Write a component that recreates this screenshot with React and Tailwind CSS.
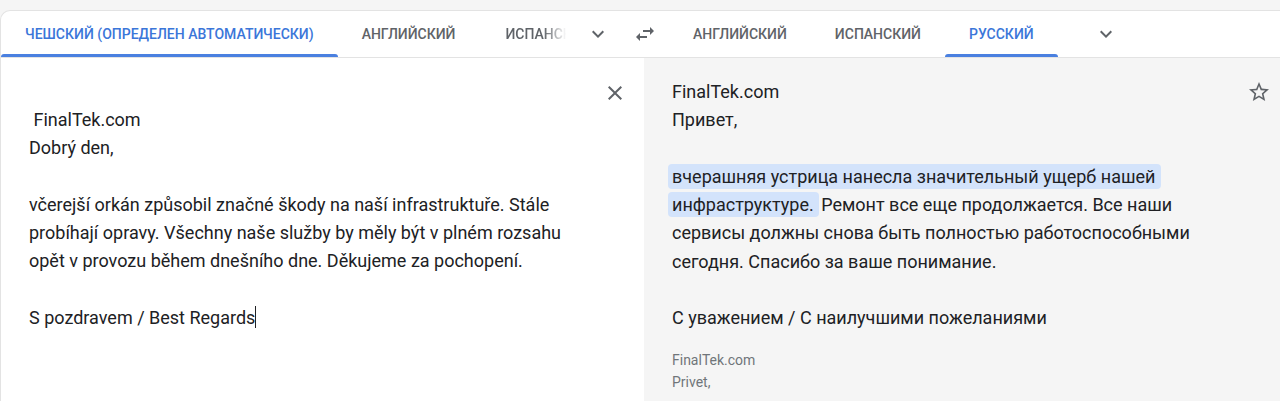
import React from "react";

const font = { fontFamily: "Roboto, 'Noto Sans', Arial, sans-serif" };

function Chevron() {
  return (
    <svg width="24" height="24" viewBox="0 0 24 24" fill="#5f6368">
      <path d="M7.41 8.59 12 13.17l4.59-4.58L18 10l-6 6-6-6 1.41-1.41z" />
    </svg>
  );
}

function Swap() {
  return (
    <svg width="24" height="24" viewBox="0 0 24 24" fill="#5f6368">
      <path d="M6.99 11 3 15l3.99 4v-3H14v-2H6.99v-3zM21 9l-3.99-4v3H10v2h7.01v3L21 9z" />
    </svg>
  );
}

function CloseIcon() {
  return (
    <svg width="24" height="24" viewBox="0 0 24 24" fill="#5f6368">
      <path d="M19 6.41 17.59 5 12 10.59 6.41 5 5 6.41 10.59 12 5 17.59 6.41 19 12 13.41 17.59 19 19 17.59 13.41 12z" />
    </svg>
  );
}

function StarIcon() {
  return (
    <svg width="24" height="24" viewBox="0 0 24 24" fill="#5f6368">
      <path d="M22 9.24l-7.19-.62L12 2 9.19 8.63 2 9.24l5.46 4.73L5.82 21 12 17.27 18.18 21l-1.63-7.03L22 9.24zM12 15.4l-3.76 2.27 1-4.28-3.32-2.88 4.38-.38L12 6.1l1.71 4.04 4.38.38-3.32 2.88 1 4.28L12 15.4z" />
    </svg>
  );
}

function Tab({ label, active }) {
  return (
    <div className="relative h-full flex items-center px-6 shrink-0">
      <span
        className={
          "text-[14px] font-medium " +
          (active ? "text-[#3b76d9]" : "text-[#5f6368]")
        }
      >
        {label}
      </span>
      {active && (
        <div className="absolute left-0 right-0 bottom-0 h-[3px] bg-[#4a80e0] rounded-t-[3px]" />
      )}
    </div>
  );
}

export default function App() {
  return (
    <div className="w-[1280px] h-[401px] overflow-hidden bg-[#f5f5f5] pt-[10px]" style={font}>
      <div className="h-full bg-white rounded-tl-[10px] border-t border-l border-[#e3e3e3] flex flex-col">
        {/* tab bar */}
        <div className="h-[47px] flex border-b border-[#e3e3e3] shrink-0">
          <div className="w-[620px] flex h-full shrink-0">
            <Tab label="ЧЕШСКИЙ (ОПРЕДЕЛЕН АВТОМАТИЧЕСКИ)" active />
            <Tab label="АНГЛИЙСКИЙ" />
            <div className="h-full flex items-center pl-[26px] w-[95px] overflow-hidden shrink-0 [mask-image:linear-gradient(to_right,black_68%,transparent_92%)]">
              <span className="text-[14px] font-medium text-[#5f6368] whitespace-nowrap">ИСПАНСКИЙ</span>
            </div>
            <div className="w-[48px] h-full flex items-center justify-center shrink-0">
              <Chevron />
            </div>
          </div>
          <div className="w-[48px] h-full flex items-center justify-center shrink-0">
            <Swap />
          </div>
          <div className="flex h-full">
            <Tab label="АНГЛИЙСКИЙ" />
            <Tab label="ИСПАНСКИЙ" />
            <Tab label="РУССКИЙ" active />
            <div className="ml-6 w-[48px] h-full flex items-center justify-center shrink-0">
              <Chevron />
            </div>
          </div>
        </div>

        {/* panels */}
        <div className="flex flex-1 min-h-0">
          <div className="w-[643px] shrink-0 relative bg-white pl-[28px] pt-[48px] text-[18px] leading-[28.3px] text-[#202124]">
            <div className="absolute right-[17px] top-[23px]">
              <CloseIcon />
            </div>
            <div>&nbsp;FinalTek.com</div>
            <div>Dobrý den,</div>
            <div>&nbsp;</div>
            <div>včerejší orkán způsobil značné škody na naší infrastruktuře. Stále</div>
            <div>probíhají opravy. Všechny naše služby by měly být v plném rozsahu</div>
            <div>opět v provozu během dnešního dne. Děkujeme za pochopení.</div>
            <div>&nbsp;</div>
            <div>
              S pozdravem / Best Regards
              <span className="inline-block w-[1px] h-[22px] bg-[#202124] align-[-4px]" />
            </div>
          </div>
          <div className="flex-1 bg-[#f5f5f5] relative pl-[28px] pt-[20px] text-[18px] leading-[28.3px] text-[#202124]">
            <div className="absolute right-[9px] top-[22px]">
              <StarIcon />
            </div>
            <div>FinalTek.com</div>
            <div>Привет,</div>
            <div>&nbsp;</div>
            <div>
              <span className="bg-[#d3e3fb] rounded-[4px] pl-[4px] pr-[6px] -ml-[4px] py-[2px]">
                вчерашняя устрица нанесла значительный ущерб нашей
              </span>
            </div>
            <div>
              <span className="bg-[#d3e3fb] rounded-[4px] pl-[4px] pr-[1px] -ml-[4px] py-[2px]">
                инфраструктуре.&nbsp;
              </span>
              <span className="ml-[2px]">Ремонт все еще продолжается. Все наши</span>
            </div>
            <div>сервисы должны снова быть полностью работоспособными</div>
            <div>сегодня. Спасибо за ваше понимание.</div>
            <div>&nbsp;</div>
            <div>С уважением / С наилучшими пожеланиями</div>
            <div className="mt-[16px] text-[14px] leading-[22px] text-[#70757a]">
              <div>FinalTek.com</div>
              <div>Privet,</div>
            </div>
          </div>
        </div>
      </div>
    </div>
  );
}
